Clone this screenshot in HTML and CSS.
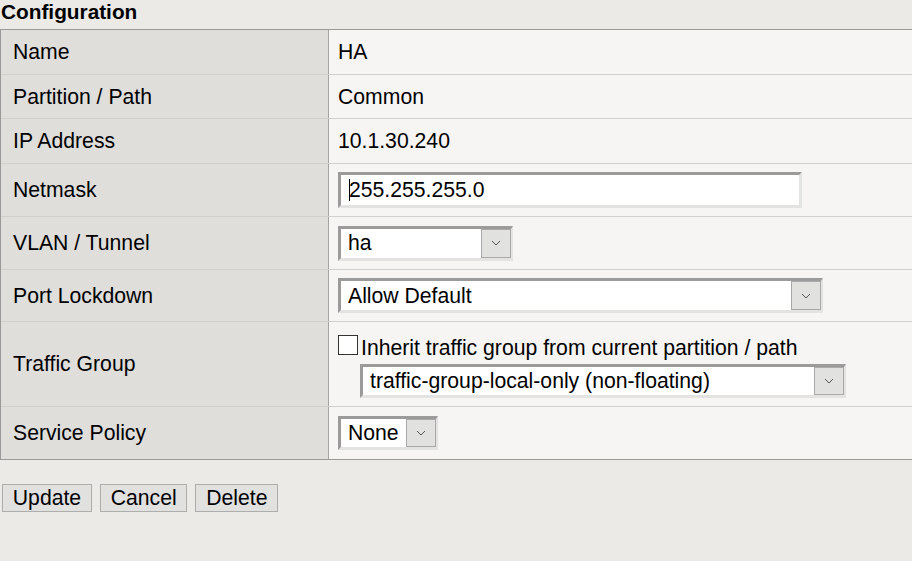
FILE: index.html
```html
<!DOCTYPE html>
<html>
<head>
<meta charset="utf-8">
<link rel="stylesheet" href="styles.css">
</head>
<body>
<div class="page">
  <div class="header">Configuration</div>
  <div class="config">
    <div class="row r44">
      <div class="label">Name</div>
      <div class="value">HA</div>
    </div>
    <div class="row r43">
      <div class="label">Partition / Path</div>
      <div class="value">Common</div>
    </div>
    <div class="row r44">
      <div class="label">IP Address</div>
      <div class="value">10.1.30.240</div>
    </div>
    <div class="row r52">
      <div class="label">Netmask</div>
      <div class="value"><div class="textbox"><span class="caret"></span>255.255.255.0</div></div>
    </div>
    <div class="row r52">
      <div class="label">VLAN / Tunnel</div>
      <div class="value">
        <div class="select w-ha"><span class="sel-text">ha</span><span class="sel-btn"><svg width="10" height="6" viewBox="0 0 10 6"><path d="M1 1 L5 5 L9 1" fill="none" stroke="#555" stroke-width="1"/></svg></span></div>
      </div>
    </div>
    <div class="row r51">
      <div class="label">Port Lockdown</div>
      <div class="value">
        <div class="select w-port"><span class="sel-text">Allow Default</span><span class="sel-btn"><svg width="10" height="6" viewBox="0 0 10 6"><path d="M1 1 L5 5 L9 1" fill="none" stroke="#555" stroke-width="1"/></svg></span></div>
      </div>
    </div>
    <div class="row r84">
      <div class="label">Traffic Group</div>
      <div class="value stack">
        <div class="check-line"><span class="checkbox"></span><span class="check-text">Inherit traffic group from current partition / path</span></div>
        <div class="select w-tg indent"><span class="sel-text">traffic-group-local-only (non-floating)</span><span class="sel-btn"><svg width="10" height="6" viewBox="0 0 10 6"><path d="M1 1 L5 5 L9 1" fill="none" stroke="#555" stroke-width="1"/></svg></span></div>
      </div>
    </div>
    <div class="row r52 last">
      <div class="label">Service Policy</div>
      <div class="value">
        <div class="select w-none"><span class="sel-text">None</span><span class="sel-btn"><svg width="10" height="6" viewBox="0 0 10 6"><path d="M1 1 L5 5 L9 1" fill="none" stroke="#555" stroke-width="1"/></svg></span></div>
      </div>
    </div>
  </div>
  <div class="actions">
    <button class="btn">Update</button>
    <button class="btn">Cancel</button>
    <button class="btn">Delete</button>
  </div>
</div>
</body>
</html>
```

FILE: styles.css
```css
html, body {
  margin: 0;
  padding: 0;
  background: #ebeae6;
}
body {
  font-family: "Liberation Sans", Arial, sans-serif;
  font-size: 21.2px;
  color: #000;
  width: 912px;
  height: 561px;
  overflow: hidden;
}
.header {
  font-weight: bold;
  font-size: 20.8px;
  line-height: 24px;
  padding: 0 0 5px 1px;
}
.config {
  border-top: 1px solid #9a9a9a;
  border-left: 1px solid #9a9a9a;
  border-bottom: 1px solid #9a9a9a;
}
.row {
  display: grid;
  grid-template-columns: 328px 1fr;
  border-bottom: 1px solid #d0d0ce;
}
.row.last {
  border-bottom: none;
}
.r43 { height: 43px; }
.r44 { height: 44px; }
.r51 { height: 51px; }
.r52 { height: 52px; }
.r84 { height: 84px; }
.label {
  background: #dfdedb;
  border-right: 1px solid #a4a4a2;
  display: flex;
  align-items: center;
  padding-left: 12px;
}
.value {
  background: #f6f5f3;
  display: flex;
  align-items: center;
  padding-left: 9px;
}
.value.stack {
  flex-direction: column;
  align-items: flex-start;
  justify-content: flex-start;
  padding-top: 14px;
  box-sizing: border-box;
}
.textbox {
  box-sizing: border-box;
  width: 464px;
  height: 36px;
  border: 3px solid;
  border-color: #9b9b9b #e3e3e1 #e3e3e1 #9b9b9b;
  background: #fff;
  display: flex;
  align-items: center;
  padding-left: 8px;
}
.caret {
  display: inline-block;
  width: 1px;
  height: 22px;
  background: #000;
  margin-right: -1px;
}
.select {
  box-sizing: border-box;
  height: 35px;
  border: 3px solid;
  border-color: #9b9b9b #e3e3e1 #e3e3e1 #9b9b9b;
  border-right-width: 2px;
  background: #fff;
  display: flex;
  align-items: stretch;
}
.sel-text {
  flex: 1;
  display: flex;
  align-items: center;
  padding-left: 7px;
  white-space: nowrap;
}
.sel-btn {
  box-sizing: border-box;
  width: 30px;
  background: #e1e1e0;
  border: 1px solid #a9a9a9;
  display: flex;
  align-items: center;
  justify-content: center;
}
.w-ha { width: 175px; }
.w-port { width: 485px; }
.w-tg { width: 486px; height: 34px; }
.w-none { width: 100px; height: 34px; }
.indent { margin-left: 22px; margin-top: 4px; }
.check-line {
  display: flex;
  align-items: flex-start;
  height: 24px;
  line-height: 24px;
}
.checkbox {
  box-sizing: border-box;
  width: 20px;
  height: 20px;
  border: 1px solid #333;
  background: #fff;
  margin-top: -1px;
  margin-right: 3px;
}
.check-text {
  white-space: nowrap;
}
.actions {
  display: flex;
  gap: 8px;
  padding: 24px 0 0 2px;
}
.btn {
  font-family: "Liberation Sans", Arial, sans-serif;
  font-size: 21.2px;
  color: #000;
  height: 28px;
  padding: 0 9.8px;
  margin: 0;
  background: #e1e1e0;
  border: 1px solid #adadad;
  border-radius: 0;
  line-height: 24px;
}
```
